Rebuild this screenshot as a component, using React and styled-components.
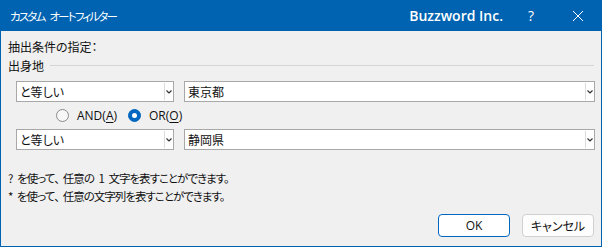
import React from 'react';
import styled, { createGlobalStyle } from 'styled-components';

const GlobalStyle = createGlobalStyle`
  html, body {
    margin: 0;
    padding: 0;
    background: #f0f0f0;
  }
  * {
    box-sizing: border-box;
  }
`;

const jp = `"Noto Sans CJK JP", "Noto Sans", sans-serif`;

const Window = styled.div`
  width: 602px;
  height: 247px;
  display: flex;
  flex-direction: column;
  background: #f0f0f0;
  border: 1px solid #0063b1;
  border-top: none;
  font-family: ${jp};
  font-size: 12px;
  font-feature-settings: "palt";
  color: #111;
`;

const TitleBar = styled.div`
  height: 31px;
  margin: 0 -1px;
  background: #0063b1;
  color: #fff;
  display: flex;
  align-items: center;
  padding-left: 10px;
`;

const Title = styled.div`
  flex: 1;
  font-size: 11.5px;
  letter-spacing: -1.8px;
  word-spacing: 4px;
`;

const Company = styled.div`
  font-family: "Open Sans", "Noto Sans", sans-serif;
  font-weight: 600;
  font-size: 14px;
  margin-right: 22px;
`;

const Help = styled.div`
  font-family: "Open Sans", sans-serif;
  font-size: 14px;
  width: 12px;
  text-align: center;
  margin-right: 35px;
`;

const CloseIcon = styled.svg`
  width: 12px;
  height: 12px;
  margin-right: 18px;
`;

const Body = styled.div`
  flex: 1;
  display: flex;
  flex-direction: column;
  padding: 7px 6px 0 7px;
`;

const Label = styled.div`
  height: 18px;
  line-height: 18px;
`;

const Group = styled.div`
  height: 18px;
  display: flex;
  align-items: center;
  gap: 6px;
`;

const Rule = styled.div`
  flex: 1;
  height: 1px;
  margin-right: 1px;
  background: #d5d5d5;
`;

const Row = styled.div`
  display: flex;
  gap: 10px;
  margin-top: ${(p) => p.top || 0}px;
  padding-left: 8px;
`;

const Combo = styled.div`
  width: ${(p) => p.width}px;
  height: 21px;
  display: flex;
  background: #fff;
  border: 1px solid #a8a8a8;
`;

const ComboText = styled.div`
  flex: 1;
  padding-left: 3px;
  line-height: 19px;
`;

const Arrow = styled.div`
  width: 9px;
  border-left: 1px solid #dcdcdc;
  margin: 1px 0;
  display: flex;
  align-items: center;
  justify-content: center;
`;

const RadioRow = styled.div`
  height: 27px;
  display: flex;
  align-items: center;
  padding-left: 48px;
`;

const RadioItem = styled.label`
  display: flex;
  align-items: center;
  gap: 8px;
  margin-right: ${(p) => p.gap || 0}px;
  font-family: "Open Sans", ${jp};
  font-size: 12px;
  u {
    text-decoration: underline;
    text-underline-offset: 2px;
  }
`;

const Dot = styled.span`
  width: 13px;
  height: 13px;
  border-radius: 50%;
  display: flex;
  align-items: center;
  justify-content: center;
  background: ${(p) => (p.checked ? '#0067c0' : '#f7f7f7')};
  border: 1px solid ${(p) => (p.checked ? '#0067c0' : '#8a8a8a')};
  &::after {
    content: '';
    width: 5px;
    height: 5px;
    border-radius: 50%;
    background: ${(p) => (p.checked ? '#fff' : 'transparent')};
  }
`;

const Hints = styled.div`
  margin-top: 19px;
`;

const Hint = styled.div`
  height: 18px;
  line-height: 18px;
  font-size: 11.5px;
  letter-spacing: -1px;
  word-spacing: 3px;
`;

const Comma = styled.span`
  font-feature-settings: normal;
  letter-spacing: -3px;
`;

const Buttons = styled.div`
  margin-top: 9px;
  display: flex;
  justify-content: flex-end;
  gap: 12px;
  padding-right: 1px;
`;

const Button = styled.button`
  width: 72px;
  height: 23px;
  border-radius: 4px;
  font-family: "Open Sans", ${jp};
  font-feature-settings: "palt";
  font-size: 12px;
  color: #111;
  padding: 0;
  background: ${(p) => (p.primary ? '#fff' : '#fdfdfd')};
  border: 1px solid ${(p) => (p.primary ? '#0067c0' : '#d0d0d0')};
`;

const Chevron = () => (
  <svg width="6" height="4" viewBox="0 0 6 4">
    <path d="M0.5 0.5 L3 3 L5.5 0.5" fill="none" stroke="#333" strokeWidth="1.2" />
  </svg>
);

const ComboBox = ({ width, value }) => (
  <Combo width={width}>
    <ComboText>{value}</ComboText>
    <Arrow>
      <Chevron />
    </Arrow>
  </Combo>
);

export default function App() {
  return (
    <>
      <GlobalStyle />
      <Window>
        <TitleBar>
          <Title>カスタム オートフィルター</Title>
          <Company>Buzzword Inc.</Company>
          <Help>?</Help>
          <CloseIcon viewBox="0 0 12 12">
            <path d="M1 1 L11 11 M11 1 L1 11" stroke="#fff" strokeWidth="1" />
          </CloseIcon>
        </TitleBar>
        <Body>
          <Label>抽出条件の指定：</Label>
          <Group>
            出身地
            <Rule />
          </Group>
          <Row top={7}>
            <ComboBox width={158} value="と等しい" />
            <ComboBox width={411} value="東京都" />
          </Row>
          <RadioRow>
            <RadioItem gap={11}>
              <Dot />
              <span>
                AND(<u>A</u>)
              </span>
            </RadioItem>
            <RadioItem>
              <Dot checked />
              <span>
                OR(<u>O</u>)
              </span>
            </RadioItem>
          </RadioRow>
          <Row>
            <ComboBox width={158} value="と等しい" />
            <ComboBox width={411} value="静岡県" />
          </Row>
          <Hints>
            <Hint>? を使って<Comma>、</Comma>任意の 1 文字を表すことができます。</Hint>
            <Hint>* を使って<Comma>、</Comma>任意の文字列を表すことができます。</Hint>
          </Hints>
          <Buttons>
            <Button primary>OK</Button>
            <Button>キャンセル</Button>
          </Buttons>
        </Body>
      </Window>
    </>
  );
}
